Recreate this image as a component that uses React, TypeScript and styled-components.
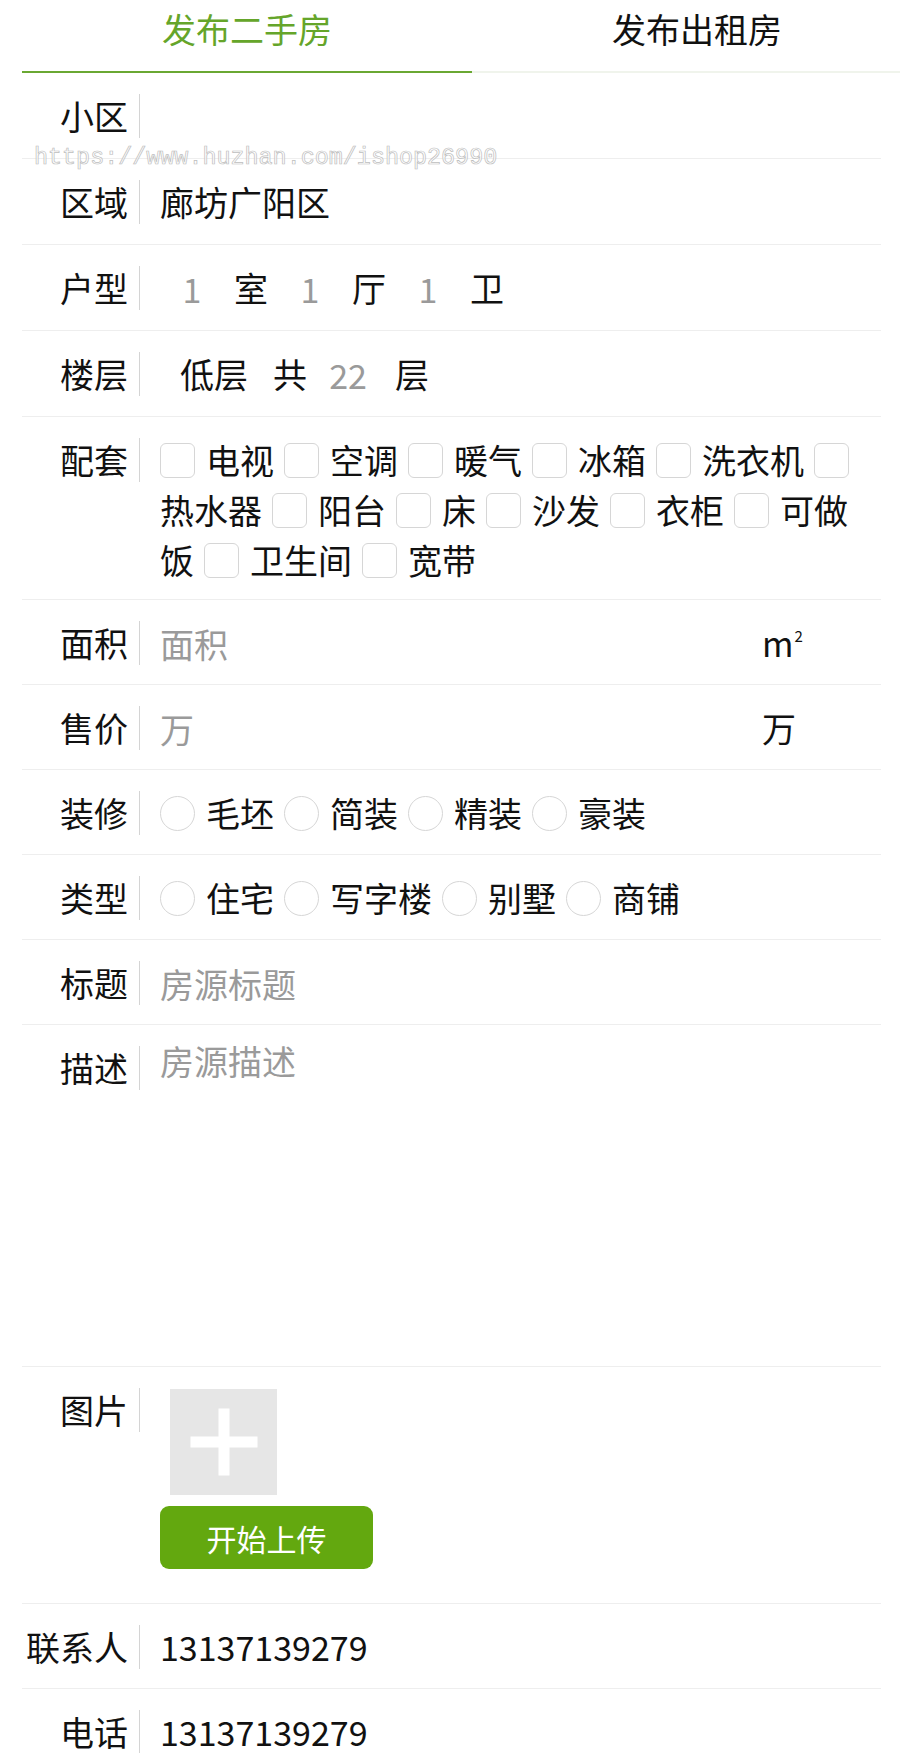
import styled, { createGlobalStyle } from 'styled-components';

const GlobalStyle = createGlobalStyle`
  body {
    margin: 0;
    background: #fff;
    overflow-x: hidden;
    font-family: "Noto Sans CJK SC", "Noto Sans", sans-serif;
    color: #111;
  }
`;

const facilities = ['电视', '空调', '暖气', '冰箱', '洗衣机', '热水器', '阳台', '床', '沙发', '衣柜', '可做饭', '卫生间', '宽带'];
const decorations = ['毛坯', '简装', '精装', '豪装'];
const types = ['住宅', '写字楼', '别墅', '商铺'];

const App = () => {
  return (
    <Page>
      <GlobalStyle />
      <Tabs>
        <Tab $active>发布二手房</Tab>
        <Tab>发布出租房</Tab>
      </Tabs>

      <Form>
        <Row $bottom={17}>
          <Label>小区</Label>
          <Field>
            <TextInput />
          </Field>
        </Row>
        <Row $bottom={17}>
          <Label>区域</Label>
          <Field>廊坊广阳区</Field>
        </Row>
        <Row $bottom={17}>
          <Label>户型</Label>
          <Field>
            <NumInput placeholder="1" />
            <Unit>室</Unit>
            <NumInput placeholder="1" />
            <Unit>厅</Unit>
            <NumInput placeholder="1" />
            <Unit>卫</Unit>
          </Field>
        </Row>
        <Row $bottom={17}>
          <Label>楼层</Label>
          <Field>
            <Picker>低层</Picker>
            <Unit>共</Unit>
            <NumInput placeholder="22" $w={62} />
            <Unit $gap={16}>层</Unit>
          </Field>
        </Row>
        <Row $bottom={14}>
          <Label>配套</Label>
          <Options>
            {facilities.map((f) => (
              <Choice key={f}>
                <Check type="checkbox" />
                <ChoiceText>{f}</ChoiceText>
              </Choice>
            ))}
          </Options>
        </Row>
        <Row>
          <Label>面积</Label>
          <Field>
            <TextInput placeholder="面积" $w={590} />
            <Suffix>
              m<sup>2</sup>
            </Suffix>
          </Field>
        </Row>
        <Row>
          <Label>售价</Label>
          <Field>
            <TextInput placeholder="万" $w={590} />
            <Suffix>万</Suffix>
          </Field>
        </Row>
        <Row>
          <Label>装修</Label>
          <Options>
            {decorations.map((d) => (
              <Choice key={d}>
                <Check type="radio" name="decor" $round />
                <ChoiceText>{d}</ChoiceText>
              </Choice>
            ))}
          </Options>
        </Row>
        <Row>
          <Label>类型</Label>
          <Options>
            {types.map((t) => (
              <Choice key={t}>
                <Check type="radio" name="kind" $round />
                <ChoiceText>{t}</ChoiceText>
              </Choice>
            ))}
          </Options>
        </Row>
        <Row>
          <Label>标题</Label>
          <Field>
            <TextInput placeholder="房源标题" />
          </Field>
        </Row>
        <Row>
          <Label>描述</Label>
          <Field>
            <TextArea placeholder="房源描述" />
          </Field>
        </Row>
        <Row $bottom={34}>
          <Label>图片</Label>
          <UploadField>
            <AddBox />
            <UploadButton type="button">开始上传</UploadButton>
          </UploadField>
        </Row>
        <Row>
          <Label>联系人</Label>
          <Field>13137139279</Field>
        </Row>
        <Row>
          <Label>电话</Label>
          <Field>13137139279</Field>
        </Row>
      </Form>

      <Watermark>https://www.huzhan.com/ishop26990</Watermark>
    </Page>
  );
};

export default App;

const Page = styled.div`
  position: relative;
  width: 900px;
  overflow: hidden;
`;

const Tabs = styled.div`
  display: flex;
  padding-left: 22px;
`;

const Tab = styled.div<{ $active?: boolean }>`
  flex: 0 0 450px;
  height: 71px;
  line-height: 57px;
  text-align: center;
  font-size: 34px;
  color: ${({ $active }) => ($active ? '#65a52a' : '#111')};
  border-bottom: 2px solid ${({ $active }) => ($active ? '#6aa832' : '#f0f4ec')};
`;

const Form = styled.div`
  padding: 0 19px 0 22px;
`;

const Row = styled.div<{ $bottom?: number }>`
  display: flex;
  align-items: flex-start;
  padding: 18px 0 ${({ $bottom }) => $bottom ?? 16}px;
  border-bottom: 1px solid #eeeeee;
`;

const Label = styled.div`
  flex: 0 0 118px;
  box-sizing: border-box;
  height: 44px;
  margin-top: 3px;
  padding-right: 11px;
  border-right: 1px solid #d4d4d4;
  line-height: 44px;
  text-align: right;
  font-size: 34px;
  white-space: nowrap;
`;

const Field = styled.div`
  flex: 1;
  display: flex;
  align-items: center;
  min-height: 50px;
  margin-left: 20px;
  font-size: 34px;
  line-height: 50px;
`;

const inputBase = `
  border: none;
  outline: none;
  background: transparent;
  padding: 0;
  margin: 0;
  font-family: inherit;
  font-size: 34px;
  color: #111;
  &::placeholder {
    color: #9a9a9a;
  }
`;

const TextInput = styled.input<{ $w?: number }>`
  ${inputBase}
  height: 50px;
  ${({ $w }) => ($w ? `flex: 0 0 ${$w}px; width: ${$w}px;` : 'flex: 1; width: 100%;')}
`;

const NumInput = styled.input<{ $w?: number }>`
  ${inputBase}
  height: 50px;
  width: ${({ $w }) => $w ?? 64}px;
  text-align: center;
`;

const Unit = styled.span<{ $gap?: number }>`
  margin: 0 10px 0 ${({ $gap }) => $gap ?? 10}px;
`;

const Picker = styled.span`
  padding: 0 15px 0 20px;
`;

const Suffix = styled.span`
  margin-left: 12px;

  sup {
    font-size: 15px;
    line-height: 0;
    vertical-align: 15px;
    margin-left: 1px;
  }
`;

const Options = styled.div`
  flex: 1;
  margin-left: 20px;
  padding-right: 16px;
  font-size: 34px;
  line-height: 50px;
`;

const Choice = styled.span``;

const Check = styled.input<{ $round?: boolean }>`
  appearance: none;
  display: inline-block;
  box-sizing: border-box;
  width: 35px;
  height: 35px;
  margin: 8px 11px 0 0;
  vertical-align: top;
  border: 1.5px solid #d6d6d6;
  border-radius: ${({ $round }) => ($round ? '50%' : '6px')};
  background: #fff;
`;

const ChoiceText = styled.span`
  margin-right: 10px;
`;

const TextArea = styled.textarea`
  ${inputBase}
  width: 100%;
  height: 307px;
  line-height: 36px;
  resize: none;
`;

const UploadField = styled.div`
  display: flex;
  flex-direction: column;
  align-items: flex-start;
  margin-left: 20px;
  padding-top: 4px;
  gap: 11px;
`;

const AddBox = styled.div`
  position: relative;
  width: 107px;
  height: 106px;
  margin-left: 10px;
  background: #e6e6e6;

  &::before,
  &::after {
    content: '';
    position: absolute;
    left: 50%;
    top: 50%;
    background: #fff;
    transform: translate(-50%, -50%);
  }
  &::before {
    width: 67px;
    height: 11px;
  }
  &::after {
    width: 11px;
    height: 67px;
  }
`;

const UploadButton = styled.button`
  width: 213px;
  height: 63px;
  border: none;
  border-radius: 9px;
  background: #63a80f;
  color: #fff;
  font-family: inherit;
  font-size: 30px;
  cursor: pointer;
`;

const Watermark = styled.div`
  position: absolute;
  left: 34px;
  top: 146px;
  font-family: "Liberation Mono", monospace;
  font-size: 23.4px;
  line-height: 24px;
  color: rgba(255, 255, 255, 0.8);
  -webkit-text-stroke: 0.7px #bdbdbd;
  pointer-events: none;
  white-space: nowrap;
`;
